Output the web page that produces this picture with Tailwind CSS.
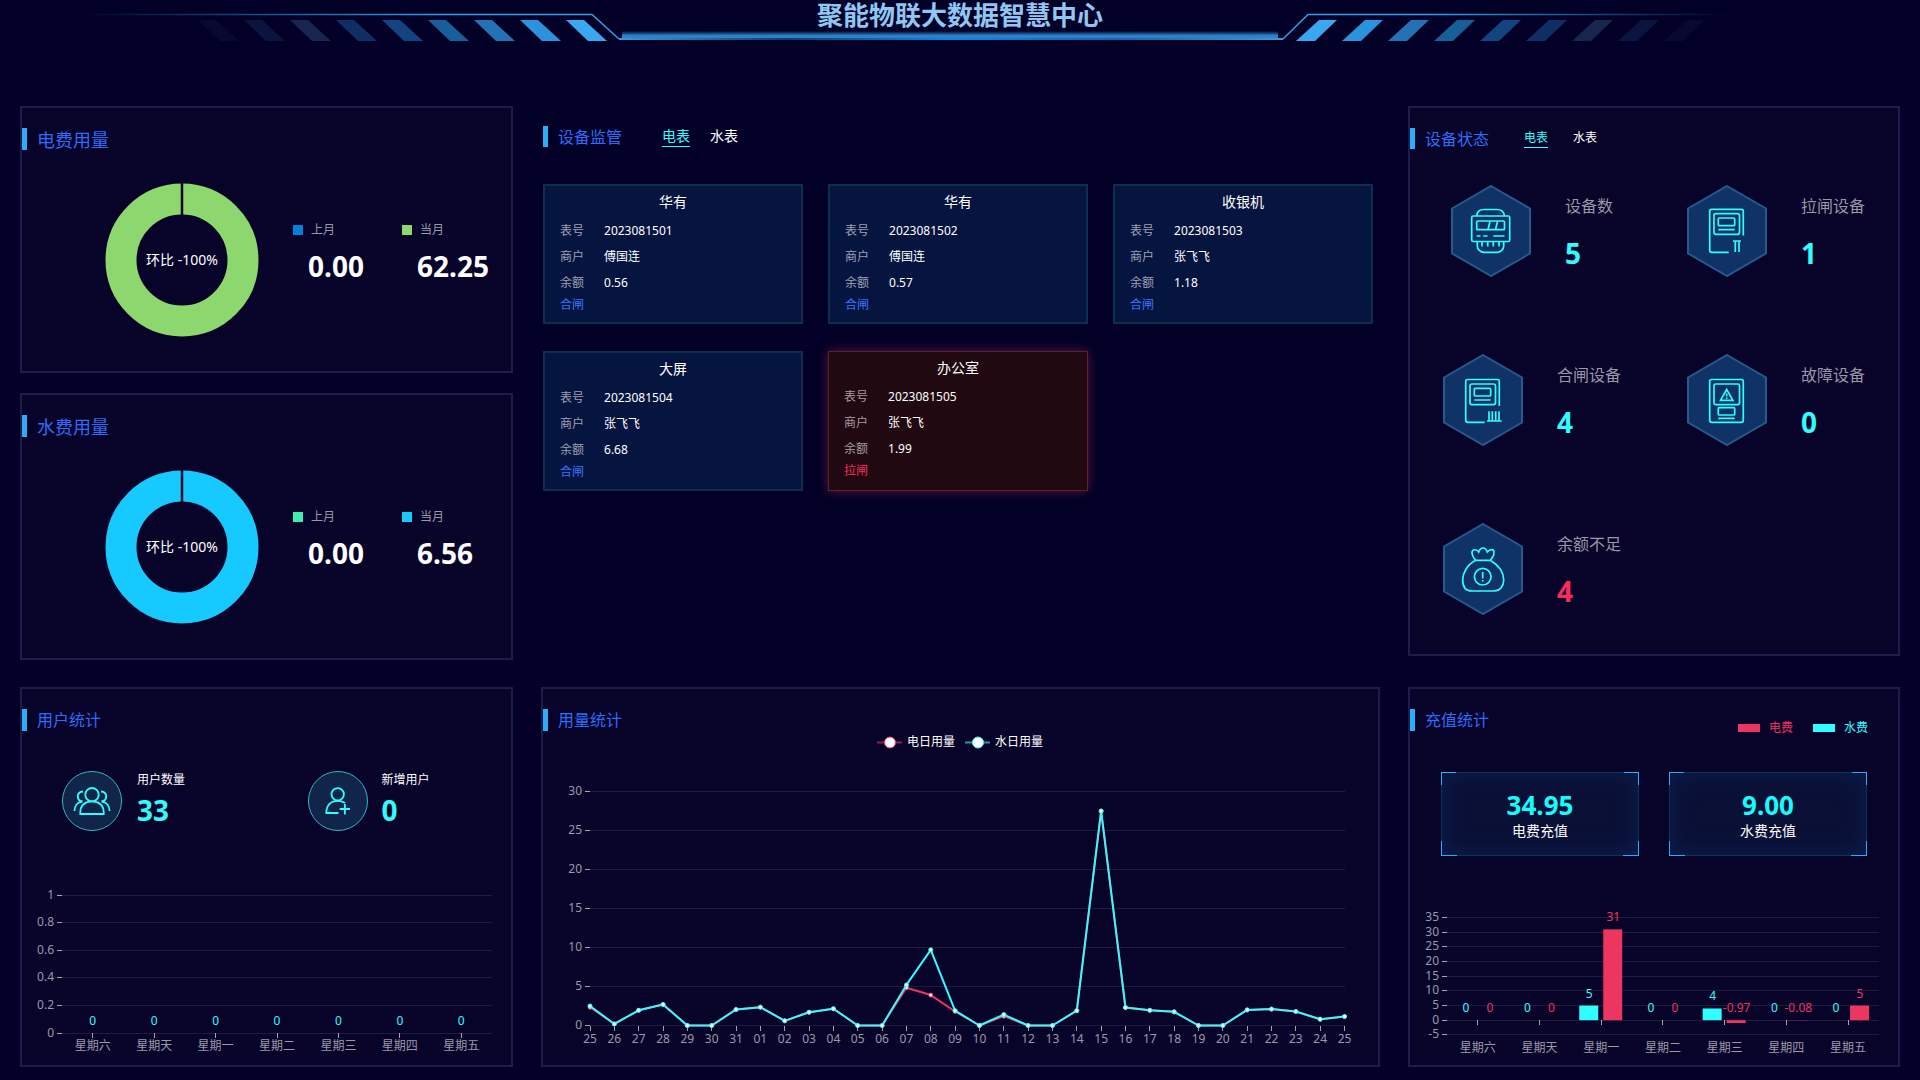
<!DOCTYPE html>
<html lang="zh-CN">
<head>
<meta charset="utf-8">
<meta name="viewport" content="width=device-width, initial-scale=1">
<title>聚能物联大数据智慧中心</title>
<script src="https://cdn.jsdelivr.net/npm/@tailwindcss/browser@4"></script>
</head>
<body class="min-h-screen bg-[#020026] font-['Noto_Sans','Noto_Sans_CJK_SC',sans-serif] text-xs text-white">

<header class="grid">
  <svg class="col-start-1 row-start-1 h-auto w-full" viewBox="0 0 1920 60" aria-hidden="true">
    <defs>
      <linearGradient id="lineL" gradientUnits="userSpaceOnUse" x1="80" y1="0" x2="592" y2="0"><stop offset="0" stop-color="#2ea0e8" stop-opacity="0"/><stop offset=".7" stop-color="#2ea0e8"/></linearGradient>
      <linearGradient id="lineR" gradientUnits="userSpaceOnUse" x1="1730" y1="0" x2="1308" y2="0"><stop offset="0" stop-color="#2ea0e8" stop-opacity="0"/><stop offset=".7" stop-color="#2ea0e8"/></linearGradient>
      <linearGradient id="glow" x1="0" y1="0" x2="0" y2="1"><stop offset="0" stop-color="#2a80c6" stop-opacity="0"/><stop offset=".55" stop-color="#2a80c6"/><stop offset="1" stop-color="#2f86cc"/></linearGradient>
      <linearGradient id="base" gradientUnits="userSpaceOnUse" x1="619" y1="0" x2="1283" y2="0"><stop offset="0" stop-color="#3a97da"/><stop offset=".25" stop-color="#0d3f6c"/><stop offset=".5" stop-color="#0a84ea"/><stop offset=".75" stop-color="#1c5fae"/><stop offset="1" stop-color="#3a97da"/></linearGradient>
    </defs>
    <path d="M80 14.5H592L619 39" fill="none" stroke="url(#lineL)" stroke-width="1.5"/>
    <path d="M1730 14.5H1308L1283 39" fill="none" stroke="url(#lineR)" stroke-width="1.5"/>
    <rect x="622" y="31" width="656" height="8" fill="url(#glow)"/>
    <rect x="619" y="38" width="664" height="2" fill="url(#base)"/>
    <g id="stripes"></g>
  </svg>
  <h1 class="col-start-1 row-start-1 justify-self-center text-[26px] leading-[30px] font-bold text-[#8fc6f2]">聚能物联大数据智慧中心</h1>
</header>

<main class="grid grid-cols-[493fr_839fr_492fr] gap-x-7 gap-y-[27px] px-5 pt-[46px] pb-[13px]">

  <div class="flex flex-col gap-5">
    <section class="min-h-[267px] border-2 border-[#1e1c4b] bg-[#070329] pt-5">
      <h2 class="h-[22px] border-l-[5px] border-[#2eacf5] pl-[10px] text-lg leading-6 text-[#2e6dfa]">电费用量</h2>
      <div class="flex items-center pt-[33px] pl-[83px]">
        <svg class="size-[154px] shrink-0" viewBox="0 0 154 154">
          <circle cx="77" cy="77" r="61" fill="none" stroke="#8cd76e" stroke-width="31"/>
          <path d="M77 0V33" stroke="#070329" stroke-width="2.5"/>
          <text class="fill-white text-sm" x="77" y="82" text-anchor="middle">环比 -100%</text>
        </svg>
        <div class="ml-[34px] flex pb-3">
          <div class="w-[109px]">
            <p class="flex items-center gap-2 text-[#9a97a8]"><i class="size-[10px] bg-[#0280dc]"></i>上月</p>
            <p class="pt-2 pl-[15px] text-[28px] leading-10 font-bold">0.00</p>
          </div>
          <div>
            <p class="flex items-center gap-2 text-[#9a97a8]"><i class="size-[10px] bg-[#8cd76e]"></i>当月</p>
            <p class="pt-2 pl-[15px] text-[28px] leading-10 font-bold">62.25</p>
          </div>
        </div>
      </div>
    </section>
    <section class="min-h-[267px] border-2 border-[#1e1c4b] bg-[#070329] pt-5">
      <h2 class="h-[22px] border-l-[5px] border-[#2eacf5] pl-[10px] text-lg leading-6 text-[#2e6dfa]">水费用量</h2>
      <div class="flex items-center pt-[33px] pl-[83px]">
        <svg class="size-[154px] shrink-0" viewBox="0 0 154 154">
          <circle cx="77" cy="77" r="61" fill="none" stroke="#16c9ff" stroke-width="31"/>
          <path d="M77 0V33" stroke="#070329" stroke-width="2.5"/>
          <text class="fill-white text-sm" x="77" y="82" text-anchor="middle">环比 -100%</text>
        </svg>
        <div class="ml-[34px] flex pb-3">
          <div class="w-[109px]">
            <p class="flex items-center gap-2 text-[#9a97a8]"><i class="size-[10px] bg-[#3eeeb0]"></i>上月</p>
            <p class="pt-2 pl-[15px] text-[28px] leading-10 font-bold">0.00</p>
          </div>
          <div>
            <p class="flex items-center gap-2 text-[#9a97a8]"><i class="size-[10px] bg-[#16c9ff]"></i>当月</p>
            <p class="pt-2 pl-[15px] text-[28px] leading-10 font-bold">6.56</p>
          </div>
        </div>
      </div>
    </section>
  </div>

  <section class="pt-5 pr-[7px] pl-[2px]">
    <div class="flex items-start">
      <h2 class="h-[21px] border-l-[5px] border-[#2eacf5] pl-[10px] text-base leading-[22px] text-[#2e6dfa]">设备监管</h2>
      <nav class="ml-10 flex gap-5 text-sm leading-5">
        <button type="button" class="border-b border-[#30fdfd] text-[#30fdfd]">电表</button>
        <button type="button" class="border-b border-transparent">水表</button>
      </nav>
    </div>
    <div class="grid grid-cols-3 gap-x-[25px] gap-y-[27px] pt-[37px] leading-[26px]">
      <article class="border-2 border-[#0e2e50] bg-[#061440] px-[15px] pt-[6px] pb-2">
        <h3 class="mb-[6px] text-center text-sm leading-5">华有</h3>
        <p class="flex gap-5"><span class="text-[#9ea1b2]">表号</span>2023081501</p>
        <p class="flex gap-5"><span class="text-[#9ea1b2]">商户</span>傅国连</p>
        <p class="flex gap-5"><span class="text-[#9ea1b2]">余额</span>0.56</p>
        <p class="leading-[18px] text-[#3876fa]">合闸</p>
      </article>
      <article class="border-2 border-[#0e2e50] bg-[#061440] px-[15px] pt-[6px] pb-2">
        <h3 class="mb-[6px] text-center text-sm leading-5">华有</h3>
        <p class="flex gap-5"><span class="text-[#9ea1b2]">表号</span>2023081502</p>
        <p class="flex gap-5"><span class="text-[#9ea1b2]">商户</span>傅国连</p>
        <p class="flex gap-5"><span class="text-[#9ea1b2]">余额</span>0.57</p>
        <p class="leading-[18px] text-[#3876fa]">合闸</p>
      </article>
      <article class="border-2 border-[#0e2e50] bg-[#061440] px-[15px] pt-[6px] pb-2">
        <h3 class="mb-[6px] text-center text-sm leading-5">收银机</h3>
        <p class="flex gap-5"><span class="text-[#9ea1b2]">表号</span>2023081503</p>
        <p class="flex gap-5"><span class="text-[#9ea1b2]">商户</span>张飞飞</p>
        <p class="flex gap-5"><span class="text-[#9ea1b2]">余额</span>1.18</p>
        <p class="leading-[18px] text-[#3876fa]">合闸</p>
      </article>
      <article class="border-2 border-[#0e2e50] bg-[#061440] px-[15px] pt-[6px] pb-2">
        <h3 class="mb-[6px] text-center text-sm leading-5">大屏</h3>
        <p class="flex gap-5"><span class="text-[#9ea1b2]">表号</span>2023081504</p>
        <p class="flex gap-5"><span class="text-[#9ea1b2]">商户</span>张飞飞</p>
        <p class="flex gap-5"><span class="text-[#9ea1b2]">余额</span>6.68</p>
        <p class="leading-[18px] text-[#3876fa]">合闸</p>
      </article>
      <article class="border border-[#5a2130] bg-[#200911] px-[15px] pt-[6px] pb-2 shadow-[0_0_10px_rgba(236,53,95,0.4)]">
        <h3 class="mb-[6px] text-center text-sm leading-5">办公室</h3>
        <p class="flex gap-5"><span class="text-[#a59ca0]">表号</span>2023081505</p>
        <p class="flex gap-5"><span class="text-[#a59ca0]">商户</span>张飞飞</p>
        <p class="flex gap-5"><span class="text-[#a59ca0]">余额</span>1.99</p>
        <p class="leading-[18px] text-[#fa2c5c]">拉闸</p>
      </article>
    </div>
  </section>

  <section class="min-h-[550px] self-start border-2 border-[#1e1c4b] bg-[#070329] pt-5">
    <div class="flex items-start">
      <h2 class="h-[21px] border-l-[5px] border-[#2eacf5] pl-[10px] text-base leading-[22px] text-[#2e6dfa]">设备状态</h2>
      <nav class="ml-[35px] flex gap-[25px] leading-[19px]">
        <button type="button" class="border-b border-[#30fdfd] text-[#30fdfd]">电表</button>
        <button type="button" class="border-b border-transparent">水表</button>
      </nav>
    </div>
    <div class="grid grid-cols-2 gap-y-[77px] pt-9 text-base text-[#9a97a8]">
      <div class="flex justify-center gap-[34px]">
        <svg class="h-[92px] w-20 shrink-0" viewBox="0 0 80 92" fill="none" stroke="#30fdfd" stroke-width="1.7">
          <path d="M40 1L79 23.500V68.500L40 91L1 68.500V23.500Z" fill="#0f3366" stroke="#255a8a" stroke-width="2"/>
          <rect x="20.700" y="31" width="38" height="25.500" rx="1.500"/>
          <path d="M25.700 31C26 27 28.500 24.500 33 24.500H46C51 24.500 53 27 53.500 31M39 36.500L37 44.500M46.500 36.500L44.500 44.500M25.700 51H29.500M32.300 51H36.500M42.300 51H53.500M26.300 57V61C26.300 64 29.500 67.300 33 67.300H46.500C49.500 67.300 52.700 64.500 52.700 61V57M31 57V61.500M36.700 57V61.500M42.300 57V61.500M48 57V61.500"/>
          <rect x="25.700" y="36" width="27.800" height="8.700" rx="1"/>
        </svg>
        <div><p class="pt-[10px] leading-[22px]">设备数</p><p class="pt-4 text-[28px] leading-10 font-bold text-[#30fdfd]">5</p></div>
      </div>
      <div class="flex justify-center gap-[34px]">
        <svg class="h-[92px] w-20 shrink-0" viewBox="0 0 80 92" fill="none" stroke="#30fdfd" stroke-width="1.700">
          <path d="M40 1L79 23.500V68.500L40 91L1 68.500V23.500Z" fill="#0f3366" stroke="#255a8a" stroke-width="2"/>
          <path d="M56.300 50.500V26.300Q56.300 24.300 54.300 24.300H24.700Q22.700 24.300 22.700 26.300V65.300Q22.700 67.300 24.700 67.300H41.700M31.300 44.700H47.700M46 56H54M48.300 56V67M52 56V67"/>
          <rect x="27" y="28.700" width="25.500" height="20.600" rx="2"/><rect x="31.300" y="33" width="16.400" height="7.700" rx="1"/>
        </svg>
        <div><p class="pt-[10px] leading-[22px]">拉闸设备</p><p class="pt-4 text-[28px] leading-10 font-bold text-[#30fdfd]">1</p></div>
      </div>
      <div class="flex justify-center gap-[34px]">
        <svg class="h-[92px] w-20 shrink-0" viewBox="0 0 80 92" fill="none" stroke="#30fdfd" stroke-width="1.700">
          <path d="M40 1L79 23.500V68.500L40 91L1 68.500V23.500Z" fill="#0f3366" stroke="#255a8a" stroke-width="2"/>
          <path d="M56.300 52V27.500Q56.300 25.500 54.300 25.500H24.700Q22.700 25.500 22.700 27.500V66.300Q22.700 68.300 24.700 68.300H41.700M31.300 46H47.700M44 67H58.700M46 57.300V67M49.300 57.300V67M52.700 57.300V67M56 57.300V67"/>
          <rect x="27" y="30" width="25.500" height="20.600" rx="2"/><rect x="31.300" y="34.300" width="16.400" height="7.700" rx="1"/>
        </svg>
        <div><p class="pt-[10px] leading-[22px]">合闸设备</p><p class="pt-4 text-[28px] leading-10 font-bold text-[#30fdfd]">4</p></div>
      </div>
      <div class="flex justify-center gap-[34px]">
        <svg class="h-[92px] w-20 shrink-0" viewBox="0 0 80 92" fill="none" stroke="#30fdfd" stroke-width="1.700">
          <path d="M40 1L79 23.500V68.500L40 91L1 68.500V23.500Z" fill="#0f3366" stroke="#255a8a" stroke-width="2"/>
          <rect x="22.700" y="25.500" width="33.600" height="42.800" rx="2"/><rect x="27" y="30" width="25.500" height="20.600" rx="1.500"/><rect x="31.300" y="53.700" width="16.400" height="7.300" rx="1"/>
          <path d="M31.300 64.300H47.700M39.700 35.500L33.500 46.300H45.900ZM39.700 39.500V42.500M39.700 43.500V45"/>
        </svg>
        <div><p class="pt-[10px] leading-[22px]">故障设备</p><p class="pt-4 text-[28px] leading-10 font-bold text-[#30fdfd]">0</p></div>
      </div>
      <div class="flex justify-center gap-[34px]">
        <svg class="h-[92px] w-20 shrink-0" viewBox="0 0 80 92" fill="none" stroke="#30fdfd" stroke-width="1.700">
          <path d="M40 1L79 23.500V68.500L40 91L1 68.500V23.500Z" fill="#0f3366" stroke="#255a8a" stroke-width="2"/>
          <path d="M32.700 37.300C24 42 19.700 50 19.700 57C19.700 65 24 68 29 68H51.300C57 68 60.700 63 60.700 57C60.700 49 55 42 47.300 37.300ZM32.700 37.300C28.500 33 28 28 30.500 27Q34 26 35.700 29Q37 25 40 25Q43 25 44.300 29Q47.500 25.500 50.500 27.300Q52.500 31 47.300 37.300M39.700 49V55.500M39.700 57V58.500"/>
          <circle cx="39.700" cy="53.700" r="8.300"/>
        </svg>
        <div><p class="pt-[10px] leading-[22px]">余额不足</p><p class="pt-4 text-[28px] leading-10 font-bold text-[#fa2c5c]">4</p></div>
      </div>
    </div>
  </section>

  <section class="border-2 border-[#1e1c4b] bg-[#070329] pt-5">
    <h2 class="h-[22px] border-l-[5px] border-[#2eacf5] pl-[10px] text-base leading-[22px] text-[#2e6dfa]">用户统计</h2>
    <div class="grid grid-cols-2 pt-10">
      <div class="flex gap-[15px] pl-10">
        <svg class="size-[60px] shrink-0" viewBox="0 0 60 60" fill="none" stroke="#30fdfd" stroke-width="1.800">
          <circle cx="30" cy="30" r="29.500" fill="#11244a" stroke="#2bb9c6" stroke-width="1"/>
          <circle cx="30" cy="23.700" r="6.700"/>
          <path d="M18.300 43V41C18.300 34.500 23 30.400 30 30.400S41.700 34.500 41.700 41V43ZM21 20.500C17.500 20.700 15.800 23 15.800 25.500C15.800 28 17.500 30 20.500 30.500C15.500 31 12.500 35 12.500 40M39 20.500C42.500 20.700 44.200 23 44.200 25.500C44.200 28 42.500 30 39.500 30.500C44.500 31 47.500 35 47.500 40"/>
        </svg>
        <div><p class="leading-[18px]">用户数量</p><p class="text-[28px] leading-[42px] font-bold text-[#30fdfd]">33</p></div>
      </div>
      <div class="flex gap-[14px] pl-[41px]">
        <svg class="size-[60px] shrink-0" viewBox="0 0 60 60" fill="none" stroke="#30fdfd" stroke-width="1.800">
          <circle cx="30" cy="30" r="29.500" fill="#11244a" stroke="#2bb9c6" stroke-width="1"/>
          <circle cx="29.700" cy="23.300" r="6.200"/>
          <path d="M37 32C35 30.500 32.500 29.800 29.700 29.800C23 29.800 18.300 34 18.300 42H30.500M36.900 33V43.500M31.700 38H42"/>
        </svg>
        <div><p class="leading-[18px]">新增用户</p><p class="text-[28px] leading-[42px] font-bold text-[#30fdfd]">0</p></div>
      </div>
    </div>
    <svg id="users" class="mt-[37px] h-auto w-full" viewBox="0 0 489 185" role="img" aria-label="用户统计"></svg>
  </section>

  <section class="border-2 border-[#1e1c4b] bg-[#070329] pt-5">
    <h2 class="h-[22px] border-l-[5px] border-[#2eacf5] pl-[10px] text-base leading-[22px] text-[#2e6dfa]">用量统计</h2>
    <svg id="usage" class="h-auto w-full" viewBox="0 0 835 334" role="img" aria-label="用量统计"></svg>
  </section>

  <section class="border-2 border-[#1e1c4b] bg-[#070329] pt-5">
    <div class="flex items-start justify-between pr-[30px]">
      <h2 class="h-[22px] border-l-[5px] border-[#2eacf5] pl-[10px] text-base leading-[22px] text-[#2e6dfa]">充值统计</h2>
      <div class="flex gap-5 pt-[10px] leading-[18px]">
        <p class="flex items-center gap-[9px] text-[#ec355f]"><i class="h-2 w-[22px] bg-[#ec355f]"></i>电费</p>
        <p class="flex items-center gap-[9px] text-[#30fdfd]"><i class="h-2 w-[22px] bg-[#30fdfd]"></i>水费</p>
      </div>
    </div>
    <div class="grid grid-cols-2 gap-[30px] pt-[35px] pr-[31px] pl-[31px] text-center">
      <div class="relative border border-[#0f3350] bg-[#0b1036] px-2 pt-4 pb-[14px] shadow-[inset_0_0_24px_#0a1f50]">
        <i class="absolute -top-px -left-px h-[13px] w-[15px] border-t border-l border-[#2eacf5]"></i>
        <i class="absolute -top-px -right-px h-[13px] w-[15px] border-t border-r border-[#2eacf5]"></i>
        <i class="absolute -bottom-px -left-px h-[15px] w-[16px] border-b border-l border-[#2eacf5]"></i>
        <i class="absolute -right-px -bottom-px h-[15px] w-[16px] border-r border-b border-[#2eacf5]"></i>
        <p class="text-[26px] leading-8 font-bold text-[#14fdfd]">34.95</p>
        <p class="text-sm leading-5">电费充值</p>
      </div>
      <div class="relative border border-[#0f3350] bg-[#0b1036] px-2 pt-4 pb-[14px] shadow-[inset_0_0_24px_#0a1f50]">
        <i class="absolute -top-px -left-px h-[13px] w-[15px] border-t border-l border-[#2eacf5]"></i>
        <i class="absolute -top-px -right-px h-[13px] w-[15px] border-t border-r border-[#2eacf5]"></i>
        <i class="absolute -bottom-px -left-px h-[15px] w-[16px] border-b border-l border-[#2eacf5]"></i>
        <i class="absolute -right-px -bottom-px h-[15px] w-[16px] border-r border-b border-[#2eacf5]"></i>
        <p class="text-[26px] leading-8 font-bold text-[#14fdfd]">9.00</p>
        <p class="text-sm leading-5">水费充值</p>
      </div>
    </div>
    <svg id="recharge" class="mt-6 h-auto w-full" viewBox="0 0 488 185" role="img" aria-label="充值统计"></svg>
  </section>
</main>

<script>
  const RED = '#ec355f', CYAN = '#30fdfd', AXIS = '#9c99a9';
  const days = ['星期六', '星期天', '星期一', '星期二', '星期三', '星期四', '星期五'];
  const text = (x, y, s, color, anchor = 'middle') =>
    `<text class="text-xs" x="${x}" y="${y + 4}" fill="${color}" text-anchor="${anchor}">${s}</text>`;
  const line = (x1, y1, x2, y2, color, w = 1) =>
    `<path d="M${x1} ${y1}L${x2} ${y2}" stroke="${color}" stroke-width="${w}"/>`;
  const half = v => Math.floor(v) + 0.5;

  // Horizontal grid: one line, tick and label per value
  function grid(values, yOf, left, right) {
    return values.map(v => {
      const y = half(yOf(v));
      return line(left, y, right, y, '#1e1b3d') + line(left - 5, y, left, y, '#a5a3b2') + text(left - 8, y - 1, v, AXIS, 'end');
    }).join('');
  }

  // Header stripes, brightest nearest the title
  const shades = ['#07092f', '#0b143f', '#17254f', '#0f2e64', '#14447f', '#165f98', '#2272b4', '#2a93dc', '#39a8ee'];
  document.getElementById('stripes').innerHTML = shades.map((c, i) => {
    const l = 198 + i * 46, r = 1705 - i * 46;
    return `<path fill="${c}" d="M${l} 20h18l23 21h-19z"/><path fill="${c}" d="M${r} 20h-18l-23 21h19z"/>`;
  }).join('');

  // New users per weekday
  (() => {
    const y = v => 165 - v * 138, step = 61.43;
    let out = grid([1, 0.8, 0.6, 0.4, 0.2, 0], y, 40, 470);
    days.forEach((d, i) => {
      const x = 40 + step * (i + 0.5);
      out += line(half(x), 165, half(x), 170, '#a5a3b2') + text(x, 178, d, AXIS) + text(x, 153, 0, CYAN);
    });
    document.getElementById('users').innerHTML = out;
  })();

  // Daily usage
  (() => {
    const labels = ['25', '26', '27', '28', '29', '30', '31'];
    for (let i = 1; i <= 25; i++) labels.push(String(i).padStart(2, '0'));
    const water = [2.5, .2, 1.95, 2.7, 0, 0, 2.05, 2.35, .6, 1.7, 2.15, 0, 0, 5.2, 9.7, 1.9, 0, 1.4, 0, 0, 1.9, 27.5, 2.3, 1.95, 1.75, 0, 0, 2, 2.1, 1.8, .8, 1.15];
    const power = water.slice();
    power[0] = 2.35; power[13] = 4.85; power[14] = 3.9; power[15] = 1.8; power[17] = 1.2;
    const x = i => 47 + i * 24.34, y = v => 294.5 - v * 7.8;
    let out = grid([30, 25, 20, 15, 10, 5, 0], y, 47, 802);
    labels.forEach((d, i) => { out += line(half(x(i)), 295, half(x(i)), 300, '#a5a3b2') + text(x(i), 308, d, AXIS); });
    [[power, RED], [water, CYAN]].forEach(([s, c]) => {
      out += `<polyline fill="none" stroke="${c}" stroke-width="2" stroke-linejoin="bevel" points="${s.map((v, i) => x(i) + ',' + y(v)).join(' ')}"/>`;
      out += s.map((v, i) => `<circle cx="${x(i)}" cy="${y(v)}" r="2" fill="#fff" stroke="${c}" stroke-width="1"/>`).join('');
    });
    [[334, '电日用量', RED], [422, '水日用量', CYAN]].forEach(([lx, s, c]) => {
      out += `<g stroke="${c}"><path d="M${lx} 11.500h25" stroke-width="2" opacity=".6"/><circle cx="${lx + 13}" cy="11.500" r="5.500" fill="#fff"/></g>` + text(lx + 30, 11, s, '#fff', 'start');
    });
    document.getElementById('usage').innerHTML = out;
  })();

  // Recharge per weekday
  (() => {
    const water = [0, 0, 5, 0, 4, 0, 0], power = [0, 0, 31, 0, -0.97, -0.08, 5];
    const y = v => 140.2 - v * 2.93, step = 61.7;
    let out = grid([35, 30, 25, 20, 15, 10, 5, 0, -5], y, 37, 469);
    days.forEach((d, i) => {
      const x = 37 + step * (i + 0.5);
      out += line(half(x), 140, half(x), 145, '#a5a3b2') + text(x, 168, d, AXIS);
      [[water[i], x - 22, x - 12, CYAN], [power[i], x + 2, x + 12, RED]].forEach(([v, bx, tx, c]) => {
        if (v) out += `<rect x="${bx}" y="${Math.min(y(v), y(0))}" width="19" height="${Math.abs(y(v) - y(0))}" fill="${c}"/>`;
        out += text(tx, Math.min(y(v), y(0)) - 12, v, c);
      });
    });
    document.getElementById('recharge').innerHTML = out;
  })();
</script>
</body>
</html>
